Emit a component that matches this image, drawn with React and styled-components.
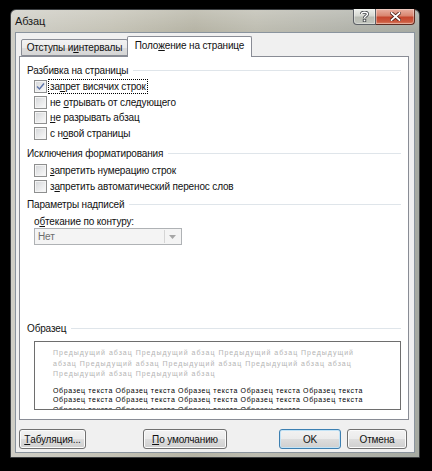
import React from 'react';
import styled, { createGlobalStyle } from 'styled-components';

const UI_FONT = '"Liberation Sans", Arial, sans-serif';

const GlobalStyle = createGlobalStyle`
  html, body {
    margin: 0;
    padding: 0;
    background: #000;
  }
  body {
    font-family: ${UI_FONT};
    font-size: 10px;
    letter-spacing: -0.15px;
    color: #111;
  }
`;

const Page = styled.div`
  width: 432px;
  height: 471px;
  box-sizing: border-box;
  padding: 9px 0 0 10px;
  background: #000;
`;

// Aero style window frame
const Window = styled.div`
  width: 410px;
  height: 449px;
  box-sizing: border-box;
  display: flex;
  flex-direction: column;
  padding: 0 4px 4px 4px;
  border: 1px solid #3a3d40;
  border-radius: 6px 6px 0 0;
  background:
    linear-gradient(180deg, rgba(255,255,255,0.22) 0px, rgba(255,255,255,0) 22px),
    linear-gradient(90deg, #cfcec6 0%, #c4c2b5 25%, #b5b3a4 45%, #bdbcb0 60%, #b2b3aa 80%, #a6aaa2 100%);
`;

const TitleBar = styled.div`
  height: 22px;
  display: flex;
  align-items: flex-start;
  justify-content: space-between;
`;

const Title = styled.div`
  margin-top: 4px;
  line-height: 15px;
  font-size: 11px;
  color: #1a1a1a;
`;

const Controls = styled.div`
  display: flex;
  margin-top: -1px;
`;

const CaptionButton = styled.div`
  width: ${p => p.$w}px;
  height: 16px;
  box-sizing: border-box;
  display: flex;
  align-items: center;
  justify-content: center;
  border: 1px solid ${p => (p.$close ? '#5e2b20' : '#5d6166')};
  border-top: none;
  border-left-width: ${p => (p.$close ? 0 : 1)}px;
  border-radius: ${p => (p.$close ? '0 0 4px 0' : '0 0 0 4px')};
  background: ${p =>
    p.$close
      ? 'linear-gradient(180deg, #e9b1a3 0%, #d98670 45%, #c5462e 55%, #cc5a3f 85%, #dc8a6e 100%)'
      : 'linear-gradient(180deg, #eef0ec 0%, #d6d8d2 45%, #b9bcb4 55%, #c3c6be 100%)'};
  box-shadow: inset 0 0 0 1px rgba(255,255,255,0.35);
`;

const Client = styled.div`
  flex: 1;
  display: flex;
  flex-direction: column;
  background: #f0f0f0;
  border: 1px solid #8a949e;
`;

const TabStrip = styled.div`
  height: 20px;
  margin-top: 3px;
  padding-left: 5px;
  display: flex;
  align-items: flex-end;
`;

const Tab = styled.div`
  box-sizing: border-box;
  width: ${p => p.$w}px;
  height: ${p => (p.$active ? 21 : 17)}px;
  margin-bottom: ${p => (p.$active ? -1 : 0)}px;
  margin-left: ${p => (p.$active ? -1 : 0)}px;
  position: relative;
  z-index: ${p => (p.$active ? 1 : 0)};
  display: flex;
  align-items: center;
  justify-content: center;
  padding-bottom: ${p => (p.$active ? 3 : 0)}px;
  border: 1px solid #898c95;
  border-bottom: ${p => (p.$active ? 'none' : '1px solid #898c95')};
  border-radius: 2px 2px 0 0;
  background: ${p =>
    p.$active
      ? '#fff'
      : 'linear-gradient(180deg, #f2f2f2 0%, #ebebeb 50%, #dddddd 51%, #d6d6d6 100%)'};
  white-space: nowrap;
`;

const Panel = styled.div`
  flex: 1;
  display: flex;
  flex-direction: column;
  margin: 0 5px 0 3px;
  padding: 5px 7px 9px 7px;
  background: #fff;
  border: 1px solid #898c95;
`;

const GroupHeader = styled.div`
  height: 16px;
  margin-top: ${p => p.$mt || 0}px;
  display: flex;
  align-items: center;
  white-space: nowrap;

  &::after {
    content: '';
    flex: 1;
    margin-left: 5px;
    border-top: 1px solid #dfe5ea;
  }
`;

const CheckList = styled.div`
  margin-top: 1px;
  margin-left: 7px;
  display: flex;
  flex-direction: column;
`;

const CheckRow = styled.div`
  height: ${p => p.$h}px;
  display: flex;
  align-items: center;
  white-space: nowrap;
`;

const Box = styled.div`
  width: 13px;
  height: 13px;
  box-sizing: border-box;
  flex: none;
  display: flex;
  align-items: center;
  justify-content: center;
  border: 1px solid #8e8f8f;
  background: linear-gradient(135deg, #d3d5d8 0%, #e8e9ea 50%, #fbfbfb 100%);
  box-shadow: inset 0 0 0 1px #f4f4f4;
`;

const CheckLabel = styled.span`
  margin-left: 1px;
  padding: 0 1px;
  line-height: 13px;
  border: 1px dotted ${p => (p.$focus ? '#000' : 'transparent')};
`;

const FieldLabel = styled.div`
  height: 14px;
  margin: 2px 0 0 7px;
  display: flex;
  align-items: center;
`;

const Select = styled.div`
  width: 148px;
  height: 17px;
  box-sizing: border-box;
  margin-left: 7px;
  display: flex;
  align-items: stretch;
  border: 1px solid #afb2b5;
  background: #f4f4f4;
  color: #6d6d6d;
`;

const SelectValue = styled.div`
  flex: 1;
  display: flex;
  align-items: center;
  padding-left: 3px;
`;

const SelectArrow = styled.div`
  width: 15px;
  display: flex;
  align-items: center;
  justify-content: center;
  border-left: 1px solid #d5d5d5;
  margin: 1px;
  background: #f4f4f4;
`;

const Spacer = styled.div`
  flex: 1;
`;

const Preview = styled.div`
  height: 69px;
  box-sizing: border-box;
  margin: 5px 0 0 7px;
  padding: 6px 0 0 18px;
  border: 1px solid #6e6e6e;
  background: #fff;
  overflow: hidden;
  font-family: "Liberation Sans", Arial, sans-serif;
  font-size: 7px;
`;

const PreviewLine = styled.div`
  white-space: nowrap;
  line-height: ${p => p.$lh}px;
  color: ${p => (p.$dim ? '#b4b4b4' : '#000')};
  letter-spacing: ${p => p.$ls}px;
  margin-top: ${p => p.$mt || 0}px;
`;

const Footer = styled.div`
  height: 20px;
  margin: 9px 7px 3px 3px;
  display: flex;
  align-items: stretch;
`;

const Button = styled.div`
  width: ${p => p.$w}px;
  margin-left: ${p => p.$ml || 0}px;
  box-sizing: border-box;
  display: flex;
  align-items: center;
  justify-content: center;
  border: 1px solid ${p => (p.$default ? '#3c7fb1' : '#707070')};
  border-radius: 3px;
  background: linear-gradient(180deg, #f2f2f2 0%, #ebebeb 50%, #dddddd 51%, #cfcfcf 100%);
  box-shadow: inset 0 0 0 1px ${p => (p.$default ? '#c3e3f6' : '#fbfbfb')};
  white-space: nowrap;
`;

const HelpGlyph = () => (
  <svg width="9" height="11" viewBox="0 0 9 11">
    <path d="M1.5 3 C1.5 0.5 7.5 0.5 7.5 3 C7.5 5 4.5 5 4.5 7" fill="none" stroke="#3d4145" strokeWidth="3" />
    <path d="M1.5 3 C1.5 0.5 7.5 0.5 7.5 3 C7.5 5 4.5 5 4.5 7" fill="none" stroke="#fff" strokeWidth="1.5" />
    <rect x="3.2" y="8.2" width="2.6" height="2.6" fill="#fff" stroke="#3d4145" strokeWidth="0.8" />
  </svg>
);

const CloseGlyph = () => (
  <svg width="11" height="9" viewBox="0 0 11 9">
    <path d="M1.5 1 L9.5 8 M9.5 1 L1.5 8" stroke="#4a1d14" strokeWidth="3.4" strokeLinecap="square" />
    <path d="M1.5 1 L9.5 8 M9.5 1 L1.5 8" stroke="#fff" strokeWidth="1.8" strokeLinecap="square" />
  </svg>
);

const CheckMark = () => (
  <svg width="9" height="9" viewBox="0 0 9 9">
    <path d="M1 4.5 L3.5 7 L8 1.5" fill="none" stroke="#5b72a8" strokeWidth="1.4" />
  </svg>
);

const DropArrow = () => (
  <svg width="7" height="4" viewBox="0 0 7 4">
    <path d="M0 0 H7 L3.5 4 Z" fill="#a6a6a6" />
  </svg>
);

const Check = ({ h, checked, focus, children }) => (
  <CheckRow $h={h}>
    <Box>{checked && <CheckMark />}</Box>
    <CheckLabel $focus={focus}>{children}</CheckLabel>
  </CheckRow>
);

const prevText = 'Предыдущий абзац';
const sample = 'Образец текста';

export default function App() {
  return (
    <Page>
      <GlobalStyle />
      <Window>
        <TitleBar>
          <Title>Абзац</Title>
          <Controls>
            <CaptionButton $w={23}><HelpGlyph /></CaptionButton>
            <CaptionButton $w={39} $close><CloseGlyph /></CaptionButton>
          </Controls>
        </TitleBar>
        <Client>
          <TabStrip>
            <Tab $w={107}>Отступы и <u>и</u>нтервалы</Tab>
            <Tab $w={125} $active>Поло<u>ж</u>ение на странице</Tab>
          </TabStrip>
          <Panel>
            <GroupHeader>Разбивка на страницы</GroupHeader>
            <CheckList>
              <Check h={15.5} checked focus>за<u>п</u>рет висячих строк</Check>
              <Check h={15.5}>не <u>о</u>трывать от следующего</Check>
              <Check h={15.5}><u>н</u>е разрывать абзац</Check>
              <Check h={15.5}>с н<u>о</u>вой страницы</Check>
            </CheckList>

            <GroupHeader $mt={4}>Исключения форматирования</GroupHeader>
            <CheckList>
              <Check h={16}><u>з</u>апретить нумерацию строк</Check>
              <Check h={16}>з<u>а</u>претить автоматический перенос слов</Check>
            </CheckList>

            <GroupHeader $mt={2}>Параметры надписей</GroupHeader>
            <FieldLabel>о<u>б</u>текание по контуру:</FieldLabel>
            <Select>
              <SelectValue>Нет</SelectValue>
              <SelectArrow><DropArrow /></SelectArrow>
            </Select>

            <Spacer />

            <GroupHeader>Образец</GroupHeader>
            <Preview>
              <PreviewLine $dim $lh={10.5} $ls={1}>{`${prevText} ${prevText} ${prevText} Предыдущий`}</PreviewLine>
              <PreviewLine $dim $lh={10.5} $ls={1}>{`абзац ${prevText} ${prevText} ${prevText} абзац`}</PreviewLine>
              <PreviewLine $dim $lh={10.5} $ls={1}>{`${prevText} ${prevText}`}</PreviewLine>
              <PreviewLine $lh={9.5} $ls={0.65} $mt={6}>{`${sample} ${sample} ${sample} ${sample} ${sample}`}</PreviewLine>
              <PreviewLine $lh={9.5} $ls={0.65}>{`${sample} ${sample} ${sample} ${sample} ${sample}`}</PreviewLine>
              <PreviewLine $lh={9.5} $ls={0.65}>{`${sample} ${sample} ${sample} ${sample}`}</PreviewLine>
            </Preview>
          </Panel>
          <Footer>
            <Button $w={67}><u>Т</u>абуляция...</Button>
            <Button $w={84} $ml={57}><u>П</u>о умолчанию</Button>
            <Spacer />
            <Button $w={62} $default>OK</Button>
            <Button $w={60} $ml={6}>Отмена</Button>
          </Footer>
        </Client>
      </Window>
    </Page>
  );
}
